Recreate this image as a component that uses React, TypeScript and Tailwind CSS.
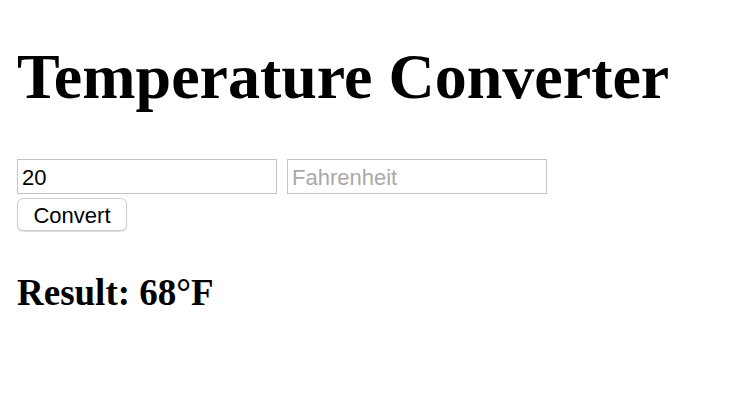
import React from "react";

export default function App() {
  return (
    <div className="min-h-[416px] bg-white px-[17px] pt-[40px] text-black" style={{ fontFamily: '"Liberation Serif", "Times New Roman", serif' }}>
      <h1 className="text-[64px] font-bold leading-[74px] m-0">Temperature Converter</h1>
      <div className="mt-[45px] flex gap-[10px]">
        <input
          type="text"
          defaultValue="20"
          className="h-[35px] w-[260px] border border-[#c4c4c4] bg-white px-[4px] pt-[2px] text-[22px] text-black outline-none"
          style={{ fontFamily: '"Liberation Sans", Arial, sans-serif' }}
        />
        <input
          type="text"
          placeholder="Fahrenheit"
          className="h-[35px] w-[260px] border border-[#c4c4c4] bg-white px-[4px] pt-[2px] text-[22px] text-black outline-none placeholder:text-[#a9a9a9]"
          style={{ fontFamily: '"Liberation Sans", Arial, sans-serif' }}
        />
      </div>
      <div className="mt-[4px]">
        <button
          className="h-[33px] w-[110px] rounded-[6px] border border-[#cfcfcf] bg-white text-[22px] text-black shadow-[0_1px_1px_rgba(0,0,0,0.15)]"
          style={{ fontFamily: '"Liberation Sans", Arial, sans-serif' }}
        >
          Convert
        </button>
      </div>
      <h3 className="mt-[40px] text-[37px] font-bold leading-[43px]">Result: 68°F</h3>
    </div>
  );
}
